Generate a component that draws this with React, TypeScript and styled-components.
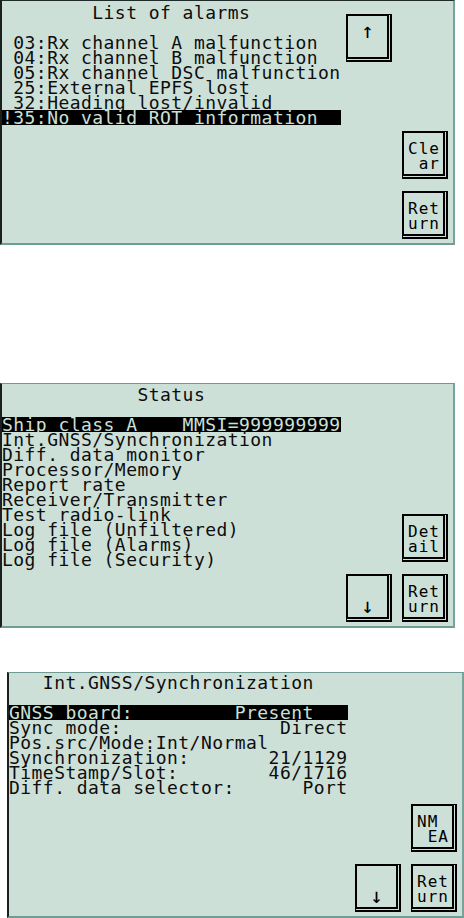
import React from "react";
import styled, { createGlobalStyle } from "styled-components";

const LCD_BG = "#cde0d8";
const INK = "#0d0d0d";

const GlobalStyle = createGlobalStyle`
  html, body {
    margin: 0;
    padding: 0;
    background: #ffffff;
  }
  body {
    font-family: "DejaVu Sans Mono", "Liberation Mono", monospace;
  }
`;

const Page = styled.div`
  display: flex;
  flex-direction: column;
  align-items: flex-start;
  width: 464px;
  height: 918px;
  overflow: hidden;
`;

const Panel = styled.section<{ $top: number; $left: number; $width: number; $height: number; $pad: number; $darkTop?: boolean }>`
  box-sizing: border-box;
  display: flex;
  margin-top: ${(p) => p.$top}px;
  margin-left: ${(p) => p.$left}px;
  width: ${(p) => p.$width}px;
  height: ${(p) => p.$height}px;
  padding-top: ${(p) => p.$pad}px;
  background: ${LCD_BG};
  border-top: 1px solid ${(p) => (p.$darkTop ? "#1e2b28" : "#6f9a93")};
  border-left: 2px solid #1b1f1e;
  border-right: 2px solid #78a39b;
  border-bottom: 2px solid #6f9c94;
`;

const Screen = styled.div`
  flex: 1;
  min-width: 0;
  font-size: 18px;
  letter-spacing: 0.45px;
  line-height: 15px;
  color: ${INK};
`;

const Line = styled.div`
  height: 15px;
  white-space: pre;
`;

const Inverse = styled.span`
  display: inline-block;
  height: 15px;
  background: #000;
  color: ${LCD_BG};
`;

const Keys = styled.div<{ $padTop: number }>`
  display: grid;
  grid-template-columns: 46px 46px;
  grid-template-rows: 48px 1fr 48px 48px;
  column-gap: 10px;
  row-gap: 12px;
  padding: ${(p) => p.$padTop}px 5px 4px 0;
  box-sizing: border-box;
  height: 100%;
`;

const Key = styled.div<{ $col: number; $row: number; $center?: boolean }>`
  box-sizing: border-box;
  grid-column: ${(p) => p.$col};
  grid-row: ${(p) => p.$row};
  width: 46px;
  height: 48px;
  border-left: 2px solid #000;
  border-top: 2px solid #000;
  border-right: 5px double #000;
  border-bottom: 5px double #000;
  padding: 8px 0 0 4px;
  display: flex;
  flex-direction: column;
  align-items: ${(p) => (p.$center ? "center" : "flex-start")};
  ${(p) => (p.$center ? "padding-left: 0;" : "")}
  font-size: 16px;
  letter-spacing: 1px;
  line-height: 15px;
  color: #000;
`;

const KeyText = styled.span`
  height: 15px;
  white-space: pre;
`;

const Arrow = styled.span`
  height: 15px;
  font-size: 21px;
  line-height: 15px;
  letter-spacing: 0;
`;

type Row = { text: string; inverse?: boolean };

function Rows({ rows }: { rows: Row[] }) {
  return (
    <Screen>
      {rows.map((r, i) => (
        <Line key={i}>{r.inverse ? <Inverse>{r.text}</Inverse> : r.text}</Line>
      ))}
    </Screen>
  );
}

const alarms: Row[] = [
  { text: "        List of alarms" },
  { text: "" },
  { text: " 03:Rx channel A malfunction" },
  { text: " 04:Rx channel B malfunction" },
  { text: " 05:Rx channel DSC malfunction" },
  { text: " 25:External EPFS lost" },
  { text: " 32:Heading lost/invalid" },
  { text: "!35:No valid ROT information  ", inverse: true },
];

const status: Row[] = [
  { text: "            Status" },
  { text: "" },
  { text: "Ship class A    MMSI=999999999", inverse: true },
  { text: "Int.GNSS/Synchronization" },
  { text: "Diff. data monitor" },
  { text: "Processor/Memory" },
  { text: "Report rate" },
  { text: "Receiver/Transmitter" },
  { text: "Test radio-link" },
  { text: "Log file (Unfiltered)" },
  { text: "Log file (Alarms)" },
  { text: "Log file (Security)" },
];

const gnss: Row[] = [
  { text: "   Int.GNSS/Synchronization" },
  { text: "" },
  { text: "GNSS board:         Present   ", inverse: true },
  { text: "Sync mode:              Direct" },
  { text: "Pos.src/Mode:Int/Normal" },
  { text: "Synchronization:       21/1129" },
  { text: "TimeStamp/Slot:        46/1716" },
  { text: "Diff. data selector:      Port" },
];

function App() {
  return (
    <Page>
      <GlobalStyle />

      <Panel $top={0} $left={0} $width={455} $height={245} $pad={4} $darkTop>
        <Rows rows={alarms} />
        <Keys $padTop={9}>
          <Key $col={1} $row={1} $center>
            <Arrow>↑</Arrow>
          </Key>
          <Key $col={2} $row={3}>
            <KeyText>Cle</KeyText>
            <KeyText> ar</KeyText>
          </Key>
          <Key $col={2} $row={4}>
            <KeyText>Ret</KeyText>
            <KeyText>urn</KeyText>
          </Key>
        </Keys>
      </Panel>

      <Panel $top={138} $left={0} $width={455} $height={245} $pad={3}>
        <Rows rows={status} />
        <Keys $padTop={9}>
          <Key $col={2} $row={3}>
            <KeyText>Det</KeyText>
            <KeyText>ail</KeyText>
          </Key>
          <Key $col={1} $row={4} $center>
            <KeyText> </KeyText>
            <Arrow>↓</Arrow>
          </Key>
          <Key $col={2} $row={4}>
            <KeyText>Ret</KeyText>
            <KeyText>urn</KeyText>
          </Key>
        </Keys>
      </Panel>

      <Panel $top={44} $left={7} $width={457} $height={246} $pad={2}>
        <Rows rows={gnss} />
        <Keys $padTop={9}>
          <Key $col={2} $row={3}>
            <KeyText>NM</KeyText>
            <KeyText> EA</KeyText>
          </Key>
          <Key $col={1} $row={4} $center>
            <KeyText> </KeyText>
            <Arrow>↓</Arrow>
          </Key>
          <Key $col={2} $row={4}>
            <KeyText>Ret</KeyText>
            <KeyText>urn</KeyText>
          </Key>
        </Keys>
      </Panel>
    </Page>
  );
}

export default App;
